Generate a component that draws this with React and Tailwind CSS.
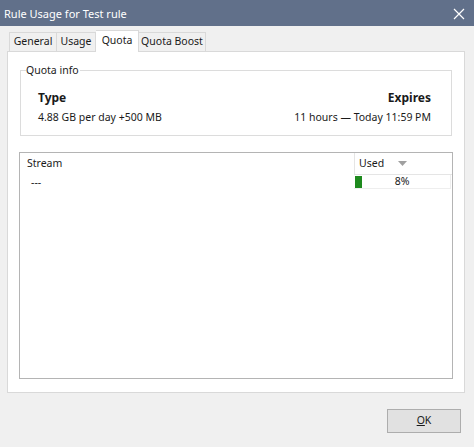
import React from "react";

export default function App() {
  const font = { fontFamily: '"Noto Sans", "Open Sans", sans-serif' };
  return (
    <div
      className="w-[474px] h-[447px] bg-[#f0f0f0] flex flex-col overflow-hidden text-[10.5px] text-[#1a1a1a]"
      style={font}
    >
      {/* Title bar */}
      <div className="h-[26px] bg-[#61708a] flex items-center justify-between pl-[4px] pr-[9px] shrink-0">
        <span className="text-white text-[11px] leading-none">Rule Usage for Test rule</span>
        <svg width="12" height="12" viewBox="0 0 12 12" className="mt-[1px]">
          <path d="M1 1 L11 11 M11 1 L1 11" stroke="#ffffff" strokeWidth="1.2" />
        </svg>
      </div>

      {/* Body */}
      <div className="flex-1 flex flex-col pl-[7px] pr-[9px] pt-[4px] relative">
        {/* Tabs */}
        <div className="flex items-end h-[21px] pl-[2px] relative z-10">
          <div className="h-[19px] w-[48px] flex items-center justify-center border border-b-0 border-[#d9d9d9] bg-[#f0f0f0]">
            General
          </div>
          <div className="h-[19px] w-[39px] flex items-center justify-center border border-l-0 border-b-0 border-[#d9d9d9] bg-[#f0f0f0]">
            Usage
          </div>
          <div className="h-[22px] w-[43px] -mb-[1px] flex items-center justify-center pb-[2px] border border-l-0 border-b-0 border-[#d9d9d9] bg-white">
            Quota
          </div>
          <div className="h-[19px] w-[67px] flex items-center justify-center border border-l-0 border-b-0 border-[#d9d9d9] bg-[#f0f0f0]">
            Quota Boost
          </div>
        </div>

        {/* Panel */}
        <div className="h-[342px] bg-white border border-[#d9d9d9] flex flex-col px-[11px] pt-[18px]">
          {/* Group box */}
          <div className="relative h-[66px] border border-[#dcdcdc] mx-[1px] flex justify-between pl-[17px] pr-[20px] pt-[17px]">
            <span className="absolute -top-[9px] left-[5px] bg-white pr-[1px] leading-[16px]">
              Quota info
            </span>
            <div className="flex flex-col">
              <span className="font-bold text-[12px] leading-[20px]">Type</span>
              <span className="leading-[18px]">4.88 GB per day +500 MB</span>
            </div>
            <div className="flex flex-col items-end">
              <span className="font-bold text-[12px] leading-[20px]">Expires</span>
              <span className="leading-[18px]">11 hours — Today 11:59 PM</span>
            </div>
          </div>

          {/* List */}
          <div className="mt-[16px] h-[227px] border border-[#b4b4b4] flex flex-col">
            <div className="flex h-[22px]">
              <div className="flex-1 pl-[7px] flex items-center">Stream</div>
              <div className="w-[98px] border-l border-b border-[#e5e5e5] flex items-center pl-[4px] gap-[14px]">
                <span>Used</span>
                <svg width="9" height="6" viewBox="0 0 9 6">
                  <path d="M0 0 L9 0 L4.5 5 Z" fill="#a0a0a0" />
                </svg>
              </div>
            </div>
            <div className="flex h-[14px]">
              <div className="flex-1 pl-[11px] flex items-center leading-none">---</div>
              <div className="w-[97px] border-b border-r border-[#eeeeee] relative flex items-center justify-center">
                <div className="absolute left-[1px] top-[1px] w-[7px] h-[12px] bg-[#1e8a1e]" />
                <span className="leading-none">8%</span>
              </div>
              <div className="w-[1px]" />
            </div>
          </div>
        </div>

        {/* Footer */}
        <div className="flex justify-end pr-[4px] pt-[16px]">
          <button className="w-[74px] h-[24px] bg-[#e1e1e1] border border-[#adadad] flex items-center justify-center">
            <span><span className="underline">O</span>K</span>
          </button>
        </div>
      </div>
    </div>
  );
}
